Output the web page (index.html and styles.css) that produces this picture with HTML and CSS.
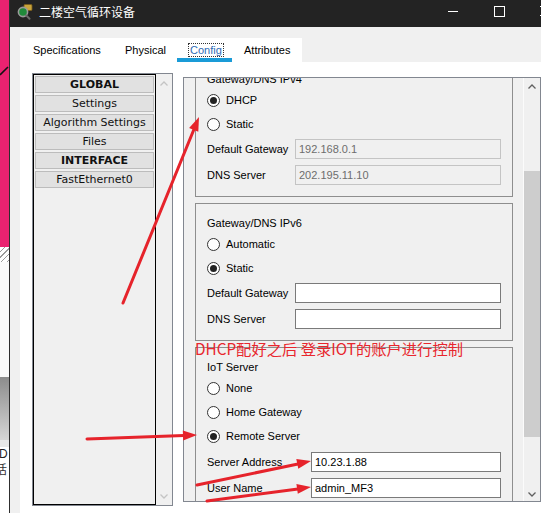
FILE: index.html
```html
<!DOCTYPE html>
<html lang="zh">
<head>
<meta charset="utf-8">
<title>二楼空气循环设备</title>
<link rel="stylesheet" href="styles.css">
</head>
<body>
<div class="desk">
  <div class="desk-pink">
    <svg class="desk-mark" width="9" height="10" viewBox="0 0 9 10"><path d="M0 9 L8 1" stroke="#111" stroke-width="1.6"/></svg>
  </div>
  <div class="desk-grip"></div>
  <div class="desk-white"></div>
  <div class="desk-grad"></div>
  <div class="desk-light"></div>
  <div class="desk-text"><span class="d1">D</span><span class="d2">话</span></div>
</div>
<div class="window">
  <div class="titlebar">
    <svg class="app-icon" width="16" height="16" viewBox="0 0 16 16">
      <rect x="7" y="0.5" width="8" height="6" rx="1" fill="#c9a43c" stroke="#7a5c18" stroke-width="0.8"/>
      <circle cx="6" cy="8" r="4.6" fill="#1f8a3a" stroke="#9a9a9a" stroke-width="1.6"/>
      <path d="M9.2 11.4 L12.5 14.8" stroke="#6a6a6a" stroke-width="2" stroke-linecap="round"/>
    </svg>
    <span class="title">二楼空气循环设备</span>
    <div class="controls">
      <div class="ctl"><span class="g-min"></span></div>
      <div class="ctl"><span class="g-max"></span></div>
      <div class="ctl"><svg class="g-close" width="10" height="10" viewBox="0 0 10 10"><path d="M0 0 L10 10 M10 0 L0 10" stroke="#fff" stroke-width="1"/></svg></div>
    </div>
  </div>
  <div class="client">
    <div class="tabs">
      <div class="tab t-spec">Specifications</div>
      <div class="tab t-phys">Physical</div>
      <div class="tab t-config"><span class="focus">Config</span></div>
      <div class="tab t-attr">Attributes</div>
    </div>
    <div class="content">
      <div class="listbox">
        <div class="list">
          <div class="item bold">GLOBAL</div>
          <div class="item">Settings</div>
          <div class="item">Algorithm Settings</div>
          <div class="item">Files</div>
          <div class="item bold">INTERFACE</div>
          <div class="item">FastEthernet0</div>
        </div>
        <div class="lscroll">
          <svg width="8" height="5" viewBox="0 0 8 5"><path d="M0.5 4.5 L4 1 L7.5 4.5" fill="none" stroke="#c4c4c4" stroke-width="1.3"/></svg>
          <svg width="8" height="5" viewBox="0 0 8 5"><path d="M0.5 0.5 L4 4 L7.5 0.5" fill="none" stroke="#c4c4c4" stroke-width="1.3"/></svg>
        </div>
      </div>
      <div class="cfg">
        <div class="cfg-view">
          <div class="cfg-inner">
            <div class="group">
              <div class="gtitle">Gateway/DNS IPv4</div>
              <div class="radio-row first"><span class="radio on"></span>DHCP</div>
              <div class="radio-row"><span class="radio"></span>Static</div>
              <div class="field first"><span class="lbl">Default Gateway</span><span class="inp off">192.168.0.1</span></div>
              <div class="field"><span class="lbl">DNS Server</span><span class="inp off">202.195.11.10</span></div>
            </div>
            <div class="group">
              <div class="gtitle">Gateway/DNS IPv6</div>
              <div class="radio-row first"><span class="radio"></span>Automatic</div>
              <div class="radio-row"><span class="radio on"></span>Static</div>
              <div class="field first"><span class="lbl">Default Gateway</span><span class="inp"></span></div>
              <div class="field"><span class="lbl">DNS Server</span><span class="inp"></span></div>
            </div>
            <div class="group">
              <div class="gtitle">IoT Server</div>
              <div class="radio-row first"><span class="radio"></span>None</div>
              <div class="radio-row"><span class="radio"></span>Home Gateway</div>
              <div class="radio-row"><span class="radio on"></span>Remote Server</div>
              <div class="field first iot"><span class="lbl wide">Server Address</span><span class="inp">10.23.1.88</span></div>
              <div class="field"><span class="lbl wide">User Name</span><span class="inp">admin_MF3</span></div>
            </div>
          </div>
        </div>
        <div class="cscroll">
          <div class="sb-btn up"><svg width="8" height="5" viewBox="0 0 8 5"><path d="M0.5 4.5 L4 1 L7.5 4.5" fill="none" stroke="#606060" stroke-width="1.3"/></svg></div>
          <div class="sb-gap"></div>
          <div class="thumb"></div>
          <div class="sb-fill"></div>
          <div class="sb-btn down"><svg width="8" height="5" viewBox="0 0 8 5"><path d="M0.5 0.5 L4 4 L7.5 0.5" fill="none" stroke="#606060" stroke-width="1.3"/></svg></div>
        </div>
      </div>
    </div>
  </div>
</div>
<div class="note">DHCP配好之后 登录IOT的账户进行控制</div>
<svg class="arrows" width="541" height="513" viewBox="0 0 541 513">
  <g stroke="#e6232b" stroke-width="3" stroke-linecap="round" fill="none">
    <path d="M123 303 L194.5 128"/>
    <path d="M87 439 L184 435.5"/>
    <path d="M197 485 L298 464"/>
    <path d="M207 501 L298 489"/>
  </g>
  <g fill="#e6232b">
    <polygon points="199,117 198.3,131.8 189.1,128.1"/>
    <polygon points="197,435 183.2,440.5 182.8,430.5"/>
    <polygon points="311,461 298.3,468.8 296.3,459"/>
    <polygon points="311,487 297.8,493.8 296.4,483.9"/>
  </g>
</svg>
</body>
</html>
```

FILE: styles.css
```css
* { box-sizing: border-box; }
html, body { margin: 0; padding: 0; }
body {
  width: 541px;
  height: 513px;
  overflow: hidden;
  display: flex;
  position: relative;
  background: #f0f0f0;
  font-family: "Liberation Sans", Arial, sans-serif;
  font-size: 11px;
  color: #000;
}

/* desktop strip behind the window */
.desk { width: 9px; flex: none; display: flex; flex-direction: column; overflow: hidden; }
.desk-pink { height: 247px; background: #ea2270; padding-top: 66px; }
.desk-mark { display: block; }
.desk-grip { height: 15px; background: repeating-linear-gradient(135deg, #ffffff 0 3px, #9a9a9a 3px 4px); }
.desk-white { height: 115px; background: #fafafa; }
.desk-grad { height: 63px; background: linear-gradient(#8c8c8c, #d6d6d6); }
.desk-light { height: 7px; background: #e8e8e8; }
.desk-text { flex: 1; background: #fff; display: flex; flex-direction: column; padding-top: 1px; font-size: 12px; }
.desk-text .d1 { display: block; height: 13px; line-height: 13px; color: #222; margin-left: -1px; overflow: hidden; }
.desk-text .d2 { display: block; height: 14px; line-height: 14px; margin-top: 1px; color: #333; margin-left: -5px; font-family: "Noto Sans CJK SC", sans-serif; overflow: hidden; }

/* window */
.window { flex: 1; min-width: 0; display: flex; flex-direction: column; border-left: 1px solid #2e2e2e; }
.titlebar { height: 27px; flex: none; background: #232323; display: flex; align-items: center; color: #fff; }
.app-icon { margin-left: 7px; margin-top: -3px; flex: none; }
.title { margin-left: 6px; margin-top: -3px; font-family: "Noto Sans CJK SC", "Microsoft YaHei", sans-serif; font-size: 12px; line-height: 16px; }
.controls { margin-left: auto; margin-right: -27px; display: flex; align-self: stretch; }
.ctl { width: 46px; display: flex; justify-content: center; align-items: flex-start; padding-top: 6px; }
.g-min { width: 10px; height: 1px; background: #fff; margin-top: 5px; }
.g-max { width: 11px; height: 11px; border: 1px solid #fff; }
.g-close { display: block; }

.client { flex: 1; min-height: 0; display: flex; flex-direction: column; padding-left: 10px; }

/* tabs */
.tabs { margin-top: 11px; height: 24px; width: 282px; background: #fff; display: flex; flex: none; }
.tab { height: 24px; display: flex; align-items: center; padding-left: 12px; white-space: nowrap; }
.t-spec { width: 93px; padding-left: 13px; }
.t-phys { width: 64px; }
.t-config { width: 55px; padding-left: 12px; box-shadow: inset 0 -4px 0 #1a9bd7; }
.t-attr { width: 70px; }
.focus { outline: 1px dotted #333; outline-offset: 0; color: #2f6cb5; padding: 0 1px; }

/* content */
.content { flex: 1; min-height: 0; background: #fff; display: flex; align-items: flex-start; padding: 11px 0 0 12px; }

.listbox { width: 141px; height: 433px; flex: none; border: 1px solid #828790; background: #f0f0f0; display: flex; }
.list { width: 123px; border: 1px solid #000; padding: 1px; display: flex; flex-direction: column; gap: 2px; }
.item {
  height: 17px;
  border: 1px solid #bcbcbc;
  background: #e1e1e1;
  text-align: center;
  font-family: "DejaVu Sans", Verdana, sans-serif;
  font-size: 11px;
  line-height: 14px;
  padding-top: 1px;
  color: #111;
  white-space: nowrap;
}
.item.bold { font-weight: bold; }
.lscroll { flex: 1; display: flex; flex-direction: column; justify-content: space-between; align-items: center; padding: 7px 0 6px; }
.lscroll svg { display: block; }

.cfg { margin-left: 10px; margin-top: 4px; width: 358px; height: 425px; flex: none; border: 1px solid #828790; background: #f0f0f0; display: flex; }
.cfg-view { flex: 1; overflow: hidden; }
.cfg-inner { margin-top: -19px; padding: 0 10px 0 11px; }

.group { border: 1px solid #8e8e8e; padding: 12px 11px 11px 11px; margin-bottom: 6px; }
.gtitle { height: 14px; line-height: 14px; }
.radio-row { height: 24px; display: flex; align-items: center; }
.radio-row.first { margin-top: 2px; }
.radio { width: 13px; height: 13px; border-radius: 50%; border: 1px solid #333; background: #fff; margin-right: 6px; display: flex; align-items: center; justify-content: center; flex: none; }
.radio.on::after { content: ""; width: 7px; height: 7px; border-radius: 50%; background: #222; }

.field { height: 20px; display: flex; align-items: center; margin-top: 6px; }
.field.first { margin-top: 3px; }
.field.first.iot { margin-top: 4px; }
.lbl { width: 88px; flex: none; white-space: nowrap; }
.lbl.wide { width: 104px; }
.inp { flex: 1; height: 20px; border: 1px solid #7a7a7a; background: #fff; padding-left: 3px; line-height: 18px; }
.inp.off { background: #f0f0f0; border-color: #c4c4c4; color: #6d6d6d; }

.cscroll { width: 17px; flex: none; border-left: 1px solid #fbfbfb; display: flex; flex-direction: column; }
.sb-btn { height: 17px; display: flex; align-items: center; justify-content: center; }
.sb-btn svg { display: block; }
.sb-btn.down { padding-top: 4px; }
.sb-gap { height: 76px; }
.thumb { height: 266px; background: #cdcdcd; }
.sb-fill { flex: 1; }

/* annotations over the screenshot */
.note {
  position: absolute;
  left: 195px;
  top: 340px;
  font-family: "Noto Sans CJK SC", sans-serif;
  font-size: 15.3px;
  line-height: 16px;
  color: #e8262d;
  white-space: nowrap;
}
.arrows { position: absolute; left: 0; top: 0; pointer-events: none; }
```
